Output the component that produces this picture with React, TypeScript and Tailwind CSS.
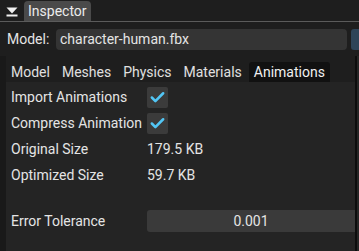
import { Check } from "lucide-react";

const tabs = ["Model", "Meshes", "Physics", "Materials", "Animations"];

function CheckBox() {
    return (
        <div className="w-[21px] h-[21px] rounded-[2px] bg-[#3b3b3b] flex items-center justify-center">
            <Check className="size-[17px] text-[#52c6f5]" strokeWidth={3.6} />
        </div>
    );
}

function Row({ label, children }: { label: string; children: React.ReactNode }) {
    return (
        <div className="flex items-center h-[22px]">
            <div className="w-[136px] shrink-0">{label}</div>
            {children}
        </div>
    );
}

export default function App() {
    return (
        <div className="w-[359px] h-[251px] overflow-hidden bg-[#1e1e1e] text-[#e4e4e4] text-[14px] font-['Roboto',sans-serif] flex flex-col">
            {/* Title bar */}
            <div className="h-[22px] shrink-0 flex items-end border-b border-[#5b5b5b]">
                <svg width="24" height="21" viewBox="0 0 24 21" className="shrink-0">
                    <path d="M6.5 7.5 H17.5 L12 13.5 Z" fill="#f0f0f0" />
                    <rect x="6.5" y="14.5" width="11" height="2" fill="#f0f0f0" />
                </svg>
                <div className="h-[20px] px-[4px] bg-[#4a4a4a] rounded-t-[4px] flex items-center leading-none text-[#ececec]">
                    Inspector
                </div>
            </div>

            {/* Model path */}
            <div className="h-[34px] shrink-0 flex items-center pl-[7px]">
                <span className="w-[49px] shrink-0">Model:</span>
                <div className="w-[293px] h-[21px] bg-[#343434] rounded-[4px] flex items-center px-[4px]">
                    character-human.fbx
                </div>
                <div className="ml-[4px] w-[8px] h-[21px] bg-[#2e4458] rounded-l-[3px]" />
            </div>

            {/* Panel */}
            <div className="flex-1 flex min-h-0">
                <div className="w-[6px] shrink-0 bg-[#191919]" />
                <div className="flex-1 flex flex-col min-w-0">
                    <div className="h-[26px] shrink-0 flex items-end gap-[2px] bg-[#1e1e1e]">
                        {tabs.map((tab) => (
                            <div
                                key={tab}
                                className={`h-[20px] px-[5px] flex items-center rounded-t-[3px] ${
                                    tab === "Animations" ? "bg-[#111111] text-[#f0f0f0]" : "text-[#e0e0e0]"
                                }`}
                            >
                                {tab}
                            </div>
                        ))}
                    </div>
                    <div className="flex-1 bg-[#242424] pt-[4px] pl-[5px] flex flex-col gap-[4px]">
                        <Row label="Import Animations">
                            <CheckBox />
                        </Row>
                        <Row label="Compress Animation">
                            <CheckBox />
                        </Row>
                        <Row label="Original Size">
                            <span>179.5 KB</span>
                        </Row>
                        <Row label="Optimized Size">
                            <span>59.7 KB</span>
                        </Row>
                        <div className="mt-[20px]">
                            <Row label="Error Tolerance">
                                <div className="flex-1 h-[22px] bg-[#3a3a3a] rounded-l-[3px] flex items-center justify-center">
                                    0.001
                                </div>
                            </Row>
                        </div>
                    </div>
                </div>
                <div className="w-[2px] shrink-0 bg-[#0d0d0d]" />
                <div className="w-[2px] shrink-0 bg-[#262626]" />
            </div>
        </div>
    );
}
